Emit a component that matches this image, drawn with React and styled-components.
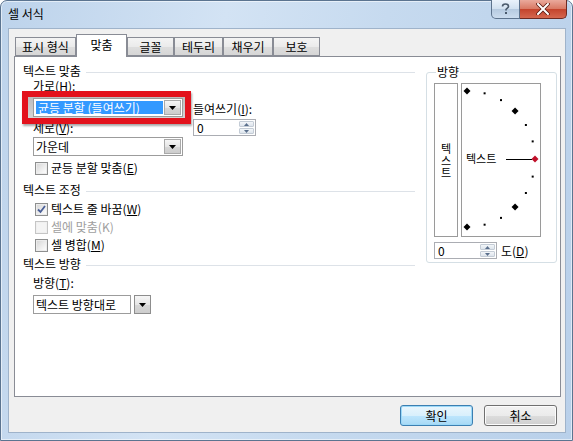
import React from 'react';
import styled, { createGlobalStyle } from 'styled-components';

const GlobalStyle = createGlobalStyle`
  html, body {
    margin: 0;
    padding: 0;
    background: #ffffff;
    overflow: hidden;
  }
  body {
    font-family: "Noto Sans CJK KR", "Noto Sans", sans-serif;
    font-size: 12px;
    color: #000;
  }
`;

const FONT = `"Noto Sans CJK KR", "Noto Sans", sans-serif`;

const Window = styled.div`
  width: 573px;
  height: 441px;
  box-sizing: border-box;
  display: flex;
  flex-direction: column;
  border: 1px solid #5b7490;
  border-radius: 7px 7px 0 0;
  background: linear-gradient(100deg, #bdd3eb 0%, #d3e3f4 35%, #c6daef 60%, #b9d0ea 100%);
  box-shadow: inset 0 0 0 1px rgba(255, 255, 255, 0.55);
`;

const TitleBar = styled.div`
  height: 27px;
  flex: none;
  display: flex;
  align-items: flex-start;
  justify-content: space-between;
`;

const Title = styled.div`
  padding: 6px 0 0 7px;
  line-height: 14px;
  font-size: 12px;
`;

const Controls = styled.div`
  display: flex;
  margin-right: 5px;
  margin-top: -1px;
`;

const HelpButton = styled.div`
  width: 29px;
  height: 19px;
  box-sizing: border-box;
  border: 1px solid #5d738d;
  border-top: none;
  border-radius: 0 0 0 5px;
  background: linear-gradient(#eaf2fb, #d2e1f0 48%, #b6cae0 52%, #cbdcee);
  display: flex;
  align-items: center;
  justify-content: center;
`;

const CloseButton = styled.div`
  width: 47px;
  height: 19px;
  box-sizing: border-box;
  border: 1px solid #6e2a22;
  border-top: none;
  border-left: none;
  border-radius: 0 0 5px 0;
  background: linear-gradient(#eaa99c, #d97a65 48%, #c4442d 52%, #d5674f);
  display: flex;
  align-items: center;
  justify-content: center;
`;

const Client = styled.div`
  flex: 1;
  margin: 0 6px 7px 7px;
  box-sizing: border-box;
  border: 1px solid #9fb3ca;
  background: #f0f0f0;
  display: flex;
  flex-direction: column;
  padding: 5px 4px 0 5px;
`;

const TabRow = styled.div`
  height: 22px;
  flex: none;
  display: flex;
  align-items: flex-end;
  padding-left: 1px;
  position: relative;
  z-index: 1;
`;

const Tab = styled.div`
  box-sizing: border-box;
  width: ${p => p.$w}px;
  height: ${p => (p.$active ? 23 : 19)}px;
  margin-bottom: ${p => (p.$active ? -1 : 0)}px;
  border: 1px solid #898c95;
  border-bottom: ${p => (p.$active ? 'none' : '1px solid #898c95')};
  background: ${p =>
    p.$active ? '#ffffff' : 'linear-gradient(#f4f4f4, #ebebeb 50%, #dedede 51%, #d6d6d6)'};
  display: flex;
  align-items: center;
  justify-content: center;
  padding-bottom: ${p => (p.$active ? 3 : 0)}px;
  line-height: 14px;
  white-space: nowrap;
`;

const Panel = styled.div`
  flex: 1;
  background: #ffffff;
  border: 1px solid #898c95;
  display: flex;
  padding: 6px 0 0 8px;
  gap: 11px;
`;

const LeftCol = styled.div`
  width: 392px;
  display: flex;
  flex-direction: column;
`;

const SectionHead = styled.div`
  height: 16px;
  display: flex;
  align-items: center;
  line-height: 14px;
  margin-top: ${p => p.$mt || 0}px;
  white-space: nowrap;

  &::after {
    content: '';
    flex: 1;
    height: 1px;
    margin: 2px 0 0 5px;
    background: #dde2e8;
  }
`;

const AlignRow = styled.div`
  display: flex;
  padding-left: 10px;
`;

const Stack = styled.div`
  display: flex;
  flex-direction: column;
  width: ${p => (p.$w ? `${p.$w}px` : 'auto')};
  margin-left: ${p => p.$ml || 0}px;
  padding-top: ${p => p.$pt || 0}px;
`;

const Label = styled.div`
  height: 14px;
  line-height: 14px;
  white-space: nowrap;
  margin-top: ${p => p.$mt || 0}px;
  padding-left: ${p => p.$pl || 0}px;
`;

const U = styled.span`
  text-decoration: underline;
`;

const Highlight = styled.div`
  position: relative;
  z-index: 2;
  margin: -2px -8px -7px -11px;
  border: 6px solid #e3121c;
  padding: 1px 2px 1px 5px;
  background: linear-gradient(#bdbdbd, #d4d4d4);
  box-shadow: 1px 2px 2px rgba(0, 0, 0, 0.35);
`;

const ComboBox = styled.div`
  box-sizing: border-box;
  width: ${p => p.$w}px;
  height: ${p => p.$h || 19}px;
  margin-top: ${p => p.$mt || 0}px;
  display: flex;
  background: ${p => (p.$split ? 'transparent' : '#ffffff')};
  border: ${p => (p.$split ? 'none' : '1px solid #9c9c9c')};
`;

const ComboText = styled.div`
  flex: 1;
  box-sizing: border-box;
  display: flex;
  align-items: center;
  white-space: nowrap;
  padding-left: 2px;
  margin: ${p => (p.$selected ? '2px 1px 2px 2px' : '0')};
  background: ${p => (p.$selected ? '#3399ff' : '#ffffff')};
  color: ${p => (p.$selected ? '#ffffff' : '#000000')};
  border: ${p => (p.$split ? '1px solid #9c9c9c' : 'none')};
  line-height: 13px;
`;

const DropButton = styled.div`
  width: 17px;
  flex: none;
  box-sizing: border-box;
  margin: ${p => (p.$split ? '0 0 0 3px' : '1px 1px 1px 0')};
  border: 1px solid ${p => (p.$split ? '#8d8d8d' : '#a9a9a9')};
  background: linear-gradient(#f6f6f6, #e6e6e6 50%, #d7d7d7 51%, #cdcdcd);
  display: flex;
  align-items: center;
  justify-content: center;
`;

const CheckRow = styled.div`
  height: ${p => p.$h || 18}px;
  display: flex;
  align-items: center;
  gap: 3px;
  margin-top: ${p => p.$mt || 0}px;
  padding-left: ${p => p.$pl || 0}px;
  color: ${p => (p.$disabled ? '#a0a0a0' : '#000')};
  line-height: 14px;
  white-space: nowrap;
`;

const Box = styled.div`
  width: 13px;
  height: 13px;
  box-sizing: border-box;
  border: 1px solid ${p => (p.$disabled ? '#c5c5c5' : '#8e8f8f')};
  background: ${p =>
    p.$disabled
      ? '#f4f4f4'
      : 'linear-gradient(135deg, #d4d4d4, #f4f4f4 70%, #ffffff)'};
  box-shadow: inset 0 0 0 1px ${p => (p.$disabled ? '#f0f0f0' : '#ececec')};
  display: flex;
  align-items: center;
  justify-content: center;
`;

const CheckList = styled.div`
  display: flex;
  flex-direction: column;
  padding-left: 12px;
  margin-top: 2px;
`;

const SpinBox = styled.div`
  box-sizing: border-box;
  width: ${p => p.$w}px;
  height: 17px;
  margin-top: ${p => p.$mt || 0}px;
  border: 1px solid #abadb3;
  background: #ffffff;
  display: flex;
`;

const SpinText = styled.div`
  flex: 1;
  padding-left: 3px;
  line-height: 15px;
`;

const SpinButtons = styled.div`
  width: 15px;
  display: flex;
  flex-direction: column;
  padding: 1px;
  gap: 1px;
`;

const SpinHalf = styled.div`
  flex: 1;
  border: 1px solid #c4ccd6;
  border-radius: 1px;
  background: linear-gradient(#f3f6f9, #dde4ec);
  display: flex;
  align-items: center;
  justify-content: center;
`;

const Group = styled.fieldset`
  margin: 2px 0 0 0;
  padding: 4px 15px 0 7px;
  width: 131px;
  height: 198px;
  box-sizing: border-box;
  min-width: 0;
  border: 1px solid #d5dfe5;
  border-radius: 3px;
`;

const Legend = styled.legend`
  padding: 0 1px;
  margin-left: 2px;
  line-height: 14px;
  font-size: 12px;
`;

const DialRow = styled.div`
  display: flex;
  gap: 3px;
`;

const VerticalBox = styled.div`
  width: 24px;
  height: 154px;
  box-sizing: border-box;
  border: 1px solid #9a9a9a;
  display: flex;
  flex-direction: column;
  align-items: center;
  justify-content: center;
  font-size: 11px;
  line-height: 12px;
`;

const DialBox = styled.div`
  width: 80px;
  height: 154px;
  box-sizing: border-box;
  border: 1px solid #9a9a9a;
`;

const DegreeRow = styled.div`
  display: flex;
  align-items: center;
  gap: 4px;
  margin-top: 5px;
  line-height: 14px;
`;

const Footer = styled.div`
  height: 35px;
  flex: none;
  display: flex;
  justify-content: flex-end;
  align-items: flex-start;
  gap: 11px;
  padding: 8px 4px 0 0;
  box-sizing: border-box;
`;

const Button = styled.div`
  width: 73px;
  height: 21px;
  box-sizing: border-box;
  border: 1px solid ${p => (p.$primary ? '#3c7fb1' : '#707070')};
  border-radius: 3px;
  background: ${p =>
    p.$primary
      ? 'linear-gradient(#eaf6fd, #d9f0fc 50%, #bee6fd 51%, #a7d9f5)'
      : 'linear-gradient(#f2f2f2, #ebebeb 50%, #dddddd 51%, #cfcfcf)'};
  box-shadow: inset 0 0 0 1px ${p => (p.$primary ? '#9cd9f8' : '#fcfcfc')};
  display: flex;
  align-items: center;
  justify-content: center;
  line-height: 14px;
`;

const Arrow = () => (
  <svg width="7" height="4" viewBox="0 0 7 4">
    <path d="M0 0 H7 L3.5 4 Z" fill="#000" />
  </svg>
);

const Combo = ({ w, mt, selected, split, children }) => (
  <ComboBox $w={w} $mt={mt} $split={split}>
    <ComboText $selected={selected} $split={split}>{children}</ComboText>
    <DropButton $split={split}>
      <Arrow />
    </DropButton>
  </ComboBox>
);

const Check = ({ checked, disabled, mt, pl, h, children }) => (
  <CheckRow $disabled={disabled} $mt={mt} $pl={pl} $h={h}>
    <Box $disabled={disabled}>
      {checked && (
        <svg width="9" height="9" viewBox="0 0 9 9">
          <path d="M1 4.5 L3.5 7 L8 1" fill="none" stroke="#4a5f97" strokeWidth="1.8" />
        </svg>
      )}
    </Box>
    <span>{children}</span>
  </CheckRow>
);

const Spin = ({ w, mt, value }) => (
  <SpinBox $w={w} $mt={mt}>
    <SpinText>{value}</SpinText>
    <SpinButtons>
      <SpinHalf>
        <svg width="5" height="3" viewBox="0 0 5 3"><path d="M0 3 L2.5 0 L5 3 Z" fill="#5a6f8c" /></svg>
      </SpinHalf>
      <SpinHalf>
        <svg width="5" height="3" viewBox="0 0 5 3"><path d="M0 0 L5 0 L2.5 3 Z" fill="#5a6f8c" /></svg>
      </SpinHalf>
    </SpinButtons>
  </SpinBox>
);

const Dial = () => {
  const cx = 5;
  const cy = 75;
  const r = 68;
  const marks = [];
  for (let a = -90; a <= 90; a += 15) {
    const rad = (a * Math.PI) / 180;
    const x = cx + r * Math.cos(rad);
    const y = cy - r * Math.sin(rad);
    if (a % 45 === 0) {
      const s = 3.5;
      marks.push(
        <path
          key={a}
          d={`M${x} ${y - s} L${x + s} ${y} L${x} ${y + s} L${x - s} ${y} Z`}
          fill={a === 0 ? '#c0102a' : '#000'}
        />
      );
    } else {
      marks.push(<rect key={a} x={x - 1} y={y - 1} width="2" height="2" fill="#000" />);
    }
  }
  return (
    <svg width="78" height="152" viewBox="0 0 78 152">
      <text x="4" y={cy + 4} fontFamily={FONT} fontSize="11" fill="#000">텍스트</text>
      <line x1="44" y1={cy + 0.5} x2="70" y2={cy + 0.5} stroke="#000" strokeWidth="1" />
      {marks}
    </svg>
  );
};

const App = () => (
  <>
    <GlobalStyle />
    <Window>
      <TitleBar>
        <Title>셀 서식</Title>
        <Controls>
          <HelpButton>
            <svg width="9" height="12" viewBox="0 0 9 12">
              <path
                d="M1.5 3.5 C1.5 1.5 3 1 4.5 1 C6.5 1 7.5 2 7.5 3.5 C7.5 5 5.5 5.5 5 6.5 L5 7.5"
                fill="none"
                stroke="#4a5a6c"
                strokeWidth="1.6"
              />
              <rect x="4" y="9" width="2" height="2" fill="#4a5a6c" />
            </svg>
          </HelpButton>
          <CloseButton>
            <svg width="14" height="12" viewBox="0 0 14 12">
              <path d="M2 1 L12 11 M12 1 L2 11" stroke="#5a1a12" strokeWidth="3.6" strokeLinecap="round" />
              <path d="M2 1 L12 11 M12 1 L2 11" stroke="#ffffff" strokeWidth="2" strokeLinecap="round" />
            </svg>
          </CloseButton>
        </Controls>
      </TitleBar>

      <Client>
        <TabRow>
          <Tab $w={61}>표시 형식</Tab>
          <Tab $w={51} $active>맞춤</Tab>
          <Tab $w={47}>글꼴</Tab>
          <Tab $w={49}>테두리</Tab>
          <Tab $w={50}>채우기</Tab>
          <Tab $w={47}>보호</Tab>
        </TabRow>

        <Panel>
          <LeftCol>
            <SectionHead>텍스트 맞춤</SectionHead>
            <AlignRow>
              <Stack $w={150}>
                <Label>가로(<U>H</U>):</Label>
                <Highlight>
                  <Combo w={150} selected>균등 분할 (들여쓰기)</Combo>
                </Highlight>
                <Label $mt={4}>세로(<U>V</U>):</Label>
                <Combo w={150} mt={2}>가운데</Combo>
                <Check mt={5} pl={2} h={14}>균등 분할 맞춤(<U>E</U>)</Check>
              </Stack>
              <Stack $ml={10} $pt={23}>
                <Label>들여쓰기(<U>I</U>):</Label>
                <Spin w={63} mt={3} value="0" />
              </Stack>
            </AlignRow>

            <SectionHead $mt={7}>텍스트 조정</SectionHead>
            <CheckList>
              <Check checked>텍스트 줄 바꿈(<U>W</U>)</Check>
              <Check disabled>셀에 맞춤(K)</Check>
              <Check>셀 병합(<U>M</U>)</Check>
            </CheckList>

            <SectionHead $mt={2}>텍스트 방향</SectionHead>
            <Label $mt={4} $pl={10}>방향(<U>T</U>):</Label>
            <AlignRow>
              <Combo w={118} mt={5} split>텍스트 방향대로</Combo>
            </AlignRow>
          </LeftCol>

          <Group>
            <Legend>방향</Legend>
            <DialRow>
              <VerticalBox>
                <span>텍</span>
                <span>스</span>
                <span>트</span>
              </VerticalBox>
              <DialBox>
                <Dial />
              </DialBox>
            </DialRow>
            <DegreeRow>
              <Spin w={63} value="0" />
              <span>도(<U>D</U>)</span>
            </DegreeRow>
          </Group>
        </Panel>

        <Footer>
          <Button $primary>확인</Button>
          <Button>취소</Button>
        </Footer>
      </Client>
    </Window>
  </>
);

export default App;
